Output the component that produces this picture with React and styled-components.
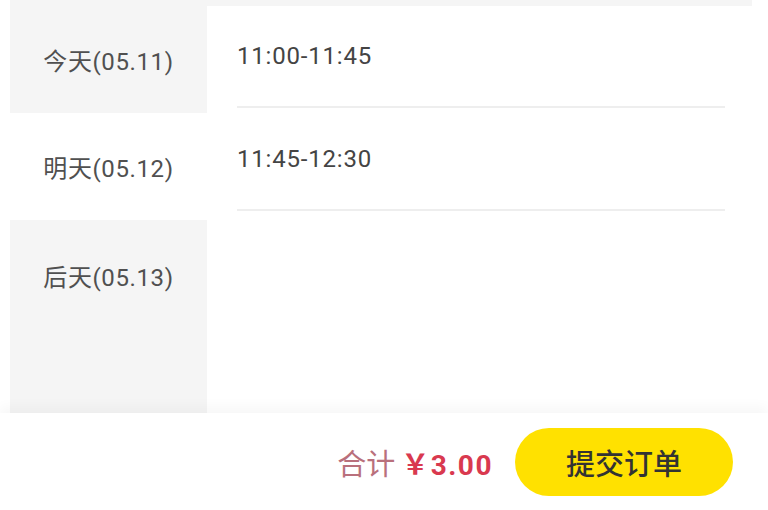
import React, { useState } from 'react';
import styled, { createGlobalStyle } from 'styled-components';

const GlobalStyle = createGlobalStyle`
	html, body {
		margin: 0;
		padding: 0;
		background: #fff;
		font-family: Roboto, "Noto Sans CJK SC", sans-serif;
	}
`;

const Page = styled.div`
	width: 768px;
	height: 510px;
	display: flex;
	flex-direction: column;
	overflow: hidden;
`;

const Picker = styled.div`
	height: 413px;
	margin: 0 16px 0 10px;
	display: flex;
	background: #fff;
`;

const Days = styled.div`
	width: 197px;
	padding-top: 6px;
	display: flex;
	flex-direction: column;
	background: #f5f5f5;
`;

const Day = styled.div`
	height: 107px;
	display: flex;
	align-items: center;
	justify-content: center;
	background: ${(props) => (props.active ? '#fff' : 'transparent')};
	color: #505050;
	font-size: 24px;
	letter-spacing: 0.6px;
	cursor: pointer;
	${(props) =>
		props.last &&
		`
		flex: 1;
		align-items: flex-start;
		padding-top: 38px;
	`}
`;

const Slots = styled.div`
	flex: 1;
	border-top: 6px solid #f5f5f5;
	padding: 0 27px 0 30px;
`;

const Slot = styled.div`
	height: 100px;
	display: flex;
	align-items: center;
	border-bottom: 2px solid #eeeeee;
	color: #444;
	font-size: 24px;
	letter-spacing: 0.8px;
	margin-top: ${(props) => (props.first ? '0' : '1px')};
`;

const Footer = styled.div`
	flex: 1;
	display: flex;
	align-items: center;
	justify-content: flex-end;
	padding-right: 35px;
	box-shadow: 0 -6px 12px rgba(0, 0, 0, 0.035);
	position: relative;
`;

const Total = styled.div`
	display: flex;
	align-items: baseline;
	margin-right: 22px;
	font-size: 29px;
	color: #b9707c;
	b {
		margin-left: 6px;
		font-size: 28px;
		font-weight: bold;
		letter-spacing: 1.5px;
		color: #d9394f;
	}
`;

const Submit = styled.button`
	width: 218px;
	height: 68px;
	border: none;
	border-radius: 34px;
	background: #ffe100;
	color: #333;
	font-family: Roboto, "Noto Sans CJK SC", sans-serif;
	font-size: 29px;
	font-weight: 500;
	cursor: pointer;
`;

const days = ['今天(05.11)', '明天(05.12)', '后天(05.13)'];
const slots = ['11:00-11:45', '11:45-12:30'];

const App = () => {
	const [active, setActive] = useState(1);
	return (
		<Page>
			<GlobalStyle />
			<Picker>
				<Days>
					{days.map((d, i) => (
						<Day key={d} active={i === active} last={i === days.length - 1} onClick={() => setActive(i)}>
							{d}
						</Day>
					))}
				</Days>
				<Slots>
					{slots.map((s, i) => (
						<Slot key={s} first={i === 0}>
							{s}
						</Slot>
					))}
				</Slots>
			</Picker>
			<Footer>
				<Total>
					合计<b>￥3.00</b>
				</Total>
				<Submit>提交订单</Submit>
			</Footer>
		</Page>
	);
};

export default App;
